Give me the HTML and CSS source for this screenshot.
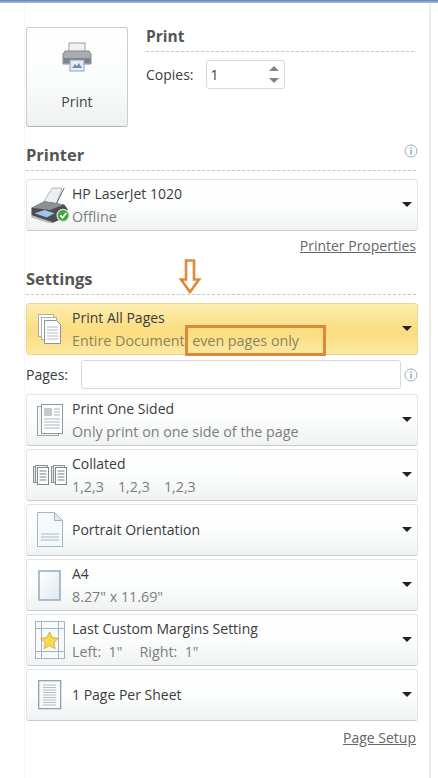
FILE: index.html
```html
<!DOCTYPE html>
<html lang="en">
<head>
    <meta charset="UTF-8">
    <meta name="viewport" content="width=device-width, initial-scale=1.0">
    <title>Print</title>
    <link rel="stylesheet" href="styles.css">
</head>
<body>
    <div class="top-bar"></div>
    <main class="panel">
        <div class="print-head">
            <button class="print-button">
                <svg width="30" height="30" viewBox="0 0 30 30">
                    <rect x="7" y="1" width="16" height="10" fill="#f2f2f2" stroke="#9a9fa3"/>
                    <path d="M3 9h24l2 3v10H1V12z" fill="#a9adb0" stroke="#85898c"/>
                    <rect x="1.500" y="16" width="27" height="5" fill="#7f8386"/>
                    <rect x="8" y="18" width="14" height="11" fill="#e4edf6" stroke="#8da3b8"/>
                    <path d="M10 26l3-4 2 2 2-3 3 5z" fill="#6f8fb0"/>
                </svg>
                <span>Print</span>
            </button>
            <div class="print-side">
                <h2 class="print-title">Print</h2>
                <div class="copies">
                    <label>Copies:</label>
                    <div class="copies-input">
                        <span>1</span>
                        <div class="spinner">
                            <i class="spin-up"></i>
                            <i class="spin-down"></i>
                        </div>
                    </div>
                </div>
            </div>
        </div>

        <div class="section-head printer-head">
            <h2>Printer</h2>
            <svg class="info" width="14" height="14" viewBox="0 0 14 14"><circle cx="7" cy="7" r="6" fill="#fff" stroke="#8fb0cc"/><rect x="6.400" y="6" width="1.300" height="4.500" fill="#6f94b5"/><rect x="6.400" y="3.500" width="1.300" height="1.400" fill="#6f94b5"/></svg>
        </div>
        <div class="drop">
            <div class="drop-icon">
                <svg width="40" height="36" viewBox="2 1 36 33">
                    <path d="M14 15L22 2h9l-5 14z" fill="#eceeef" stroke="#a8adb0" stroke-width=".8"/>
                    <path d="M26 16L33 2" stroke="#555" stroke-width=".8"/>
                    <path d="M3 20l12-6 18 3 3 4v7l-14 6L3 27z" fill="#4a4e52"/>
                    <path d="M3 20l12-6 18 3-13 5z" fill="#8b9095"/>
                    <path d="M6 25l9-3 9 3-7 4z" fill="#9fc6e6"/>
                    <path d="M3 27l19 6v2L3 29z" fill="#b5b9bc"/>
                    <circle cx="32" cy="27" r="5.500" fill="#44a63c" stroke="#d8dcd8" stroke-width="1.200"/>
                    <path d="M29.500 27l2 2.200 3.500-4.400" fill="none" stroke="#fff" stroke-width="1.600"/>
                </svg>
            </div>
            <div class="drop-text">
                <div class="drop-title">HP LaserJet 1020</div>
                <div class="drop-sub">Offline</div>
            </div>
            <i class="caret"></i>
        </div>
        <div class="link-row"><a href="#">Printer Properties</a></div>

        <div class="section-head settings-head">
            <h2>Settings</h2>
        </div>
        <div class="drop drop-active">
            <div class="drop-icon">
                <svg width="26" height="32" viewBox="0 0 26 32">
                    <rect x="1.500" y="1.500" width="15" height="22" fill="#fff" stroke="#a9afb3"/>
                    <rect x="4.500" y="4.500" width="15" height="22" fill="#fff" stroke="#a9afb3"/>
                    <path d="M7.500 7.500h12l4 4v19h-16z" fill="#fdfdfd" stroke="#8e9599"/>
                    <path d="M10 14h11M10 17h11M10 20h11M10 23h11M10 26h11" stroke="#b9bec2"/>
                </svg>
            </div>
            <div class="drop-text">
                <div class="drop-title">Print All Pages</div>
                <div class="drop-sub">Entire Document: even pages only</div>
            </div>
            <i class="caret"></i>
        </div>
        <div class="pages-row">
            <label>Pages:</label>
            <div class="pages-input"></div>
            <svg class="info" width="14" height="14" viewBox="0 0 14 14"><circle cx="7" cy="7" r="6" fill="#fff" stroke="#8fb0cc"/><rect x="6.400" y="6" width="1.300" height="4.500" fill="#6f94b5"/><rect x="6.400" y="3.500" width="1.300" height="1.400" fill="#6f94b5"/></svg>
        </div>

        <div class="drop-list">
            <div class="drop">
                <div class="drop-icon">
                    <svg width="28" height="34" viewBox="0 0 28 34">
                        <rect x="1.500" y="3.500" width="21" height="29" fill="#f4f6f7" stroke="#9aa3a8"/>
                        <rect x="5.500" y="1.500" width="21" height="29" fill="#fff" stroke="#8e979c"/>
                        <rect x="8" y="5" width="8" height="8" fill="#c3ccd3"/>
                        <path d="M18 6h6M18 9h6M18 12h6M8 16h16M8 19h16M8 22h16M8 25h16" stroke="#aeb5ba"/>
                    </svg>
                </div>
                <div class="drop-text">
                    <div class="drop-title">Print One Sided</div>
                    <div class="drop-sub">Only print on one side of the page</div>
                </div>
                <i class="caret"></i>
            </div>
            <div class="drop">
                <div class="drop-icon">
                    <svg width="34" height="22" viewBox="0 0 34 22">
                        <rect x=".5" y="2.500" width="11" height="16" fill="#dfe3e6" stroke="#8c9499"/>
                        <rect x="2.500" y="1.500" width="12" height="17" fill="#eef0f2" stroke="#8c9499"/>
                        <rect x="4.500" y="3.500" width="11" height="17" fill="#fff" stroke="#7f888d"/>
                        <path d="M6.500 7h7M6.500 10h7M6.500 13h7M6.500 16h7" stroke="#79838a"/>
                        <rect x="18.500" y="2.500" width="11" height="16" fill="#dfe3e6" stroke="#8c9499"/>
                        <rect x="20.500" y="1.500" width="11" height="17" fill="#eef0f2" stroke="#8c9499"/>
                        <rect x="22.500" y="3.500" width="11" height="17" fill="#fff" stroke="#7f888d"/>
                        <path d="M24.500 7h7M24.500 10h7M24.500 13h7M24.500 16h7" stroke="#79838a"/>
                    </svg>
                </div>
                <div class="drop-text">
                    <div class="drop-title">Collated</div>
                    <div class="drop-sub collated-sub"><span>1,2,3</span><span>1,2,3</span><span>1,2,3</span></div>
                </div>
                <i class="caret"></i>
            </div>
            <div class="drop drop-single">
                <div class="drop-icon">
                    <svg width="28" height="38" viewBox="0 0 28 38">
                        <path d="M1.500 1.500h17l8 8v26h-25z" fill="#f6f9fc" stroke="#a3b6c8"/>
                        <path d="M18.500 1.500v8h8z" fill="#dfe8f0" stroke="#a3b6c8"/>
                        <path d="M5 23h18M5 26h18M5 29h18" stroke="#a7b9c9"/>
                    </svg>
                </div>
                <div class="drop-text">
                    <div class="drop-title">Portrait Orientation</div>
                </div>
                <i class="caret"></i>
            </div>
            <div class="drop">
                <div class="drop-icon">
                    <svg width="24" height="31" viewBox="0 0 24 31">
                        <defs><linearGradient id="a4Fill" x1="0" y1="0" x2="1" y2="1"><stop offset="0" stop-color="#fff"/><stop offset="1" stop-color="#dde8f2"/></linearGradient></defs>
                        <rect x="1" y="1" width="21" height="29" fill="url(#a4Fill)" stroke="#8fa3b5" stroke-width="1.400"/>
                    </svg>
                </div>
                <div class="drop-text">
                    <div class="drop-title">A4</div>
                    <div class="drop-sub">8.27" x 11.69"</div>
                </div>
                <i class="caret"></i>
            </div>
            <div class="drop">
                <div class="drop-icon">
                    <svg width="30" height="39" viewBox="0 0 30 39">
                        <rect x=".5" y=".5" width="29" height="37" fill="#f7f9fb" stroke="#a3b3c0"/>
                        <path d="M6.500 .5v37M23.500 .5v37M.5 7.500h29M.5 30.500h29" stroke="#a3b3c0"/>
                        <path d="M14.500 11l2.700 5.600 6.100.8-4.500 4.200 1.200 6.100-5.500-3-5.500 3 1.200-6.100-4.500-4.200 6.100-.8z" fill="#f6d94e" stroke="#c9a63a" stroke-width=".8"/>
                    </svg>
                </div>
                <div class="drop-text">
                    <div class="drop-title">Last Custom Margins Setting</div>
                    <div class="drop-sub margins-sub"><span>Left:&nbsp; 1"</span><span>Right:&nbsp; 1"</span></div>
                </div>
                <i class="caret"></i>
            </div>
            <div class="drop drop-single">
                <div class="drop-icon">
                    <svg width="24" height="30" viewBox="0 0 24 30">
                        <rect x=".7" y=".7" width="22" height="28" fill="#f7f9fb" stroke="#8a9aa6" stroke-width="1.200"/>
                        <path d="M5 5h13M5 7.500h13M5 10h13M5 12.500h13M5 15h13M5 17.500h13M5 20h13M5 22.500h13M5 25h13" stroke="#b6bec4"/>
                    </svg>
                </div>
                <div class="drop-text">
                    <div class="drop-title">1 Page Per Sheet</div>
                </div>
                <i class="caret"></i>
            </div>
        </div>
        <div class="link-row page-setup"><a href="#">Page Setup</a></div>

        <!-- annotations drawn over the screenshot -->
        <svg class="mark-arrow" width="22" height="35" viewBox="0 0 22 35">
            <path d="M7 1.500h8v19h5L11 33 2 20.500h5z" fill="#fff" stroke="#e0873a" stroke-width="2.600"/>
        </svg>
        <div class="mark-box"></div>
    </main>
</body>
</html>
```
FILE: styles.css
```css
/* General body styles */
body {
    margin: 0;
    font-family: "Open Sans", "Noto Sans", sans-serif;
    font-size: 14px;
    color: #3c3c3c;
    background-color: #fff;
    height: 778px;
    overflow: hidden;
}

.top-bar {
    height: 3px;
    background: linear-gradient(#5f86ad, #a9c2d8);
}

/* Panel holding all the sections */
.panel {
    position: relative;
    box-sizing: border-box;
    width: 407px;
    height: 775px;
    margin-left: 24px;
    padding: 24px 12px 0 1px;
    border-left: 1px solid #f6f6f6;
    border-right: 2px solid #ececec;
}

/* Print button and copies */
.print-head {
    display: flex;
    gap: 18px;
}

.print-button {
    box-sizing: border-box;
    width: 102px;
    height: 100px;
    padding: 14px 0 0;
    display: flex;
    flex-direction: column;
    align-items: center;
    gap: 20px;
    font: inherit;
    color: #444;
    background: linear-gradient(#fff, #fbfcfc 55%, #eef1f1);
    border: 1px solid #c9cdce;
    border-bottom-color: #b4b8b9;
    border-radius: 3px;
}

.print-side {
    flex-grow: 1;
    margin-top: -1px;
}

.print-title {
    margin: 0 3px 0 0;
    padding-bottom: 5px;
    font-size: 15.500px;
    line-height: 20px;
    color: #555;
    border-bottom: 1px dashed #c6c6c6;
}

.copies {
    display: flex;
    align-items: center;
    gap: 12px;
    margin-top: 8px;
}

.copies-input {
    box-sizing: border-box;
    width: 79px;
    height: 29px;
    padding: 0 4px;
    display: flex;
    justify-content: space-between;
    align-items: center;
    background-color: #fff;
    border: 1px solid #d6d9da;
    border-radius: 3px;
}

.spinner {
    display: flex;
    flex-direction: column;
    gap: 7px;
    margin-right: 1px;
}

.spinner i {
    display: block;
    width: 0;
    height: 0;
    border-left: 5px solid transparent;
    border-right: 5px solid transparent;
}

.spin-up {
    border-bottom: 5px solid #808486;
}

.spin-down {
    border-top: 5px solid #808486;
}

/* Section headings */
.section-head {
    display: flex;
    justify-content: space-between;
    align-items: flex-start;
    width: 390px;
    margin-bottom: 8px;
    padding-bottom: 4px;
    border-bottom: 1px dashed #c6c6c6;
}

.section-head h2 {
    margin: 0;
    font-size: 16.500px;
    line-height: 22px;
    color: #555;
}

.printer-head {
    margin-top: 17px;
}

.settings-head {
    margin-top: 12px;
}

.printer-head .info {
    margin: 0 -2px 0 0;
}

/* Dropdown rows */
.drop {
    box-sizing: border-box;
    width: 392px;
    height: 52px;
    display: flex;
    align-items: center;
    background: linear-gradient(#fff, #fcfdfd 50%, #f0f3f3);
    border: 1px solid #e3e6e7;
    border-bottom-color: #c8cccd;
    border-radius: 3px;
}

.drop-active {
    background: linear-gradient(#fdeeb0, #fbdc7f 55%, #fde9a0);
    border-color: #ecd88c;
}

.drop-list {
    display: flex;
    flex-direction: column;
    gap: 3px;
    margin-top: 5px;
}

.drop-icon {
    width: 45px;
    flex-shrink: 0;
    display: flex;
    justify-content: center;
    align-items: center;
}

.drop-text {
    flex-grow: 1;
    line-height: 23px;
}

.drop-single .drop-text {
    padding-bottom: 2px;
}

.drop-sub {
    font-size: 14.300px;
    color: #7d7d7d;
}

.drop-active .drop-sub {
    color: #8a8460;
}

.collated-sub {
    display: flex;
    gap: 14px;
}

.margins-sub {
    display: flex;
    gap: 17px;
}

.caret {
    width: 0;
    height: 0;
    margin: 0 5px 2px 0;
    border-left: 5px solid transparent;
    border-right: 5px solid transparent;
    border-top: 5px solid #222;
}

/* Links */
.link-row {
    width: 390px;
    margin-top: 5px;
    line-height: 20px;
    text-align: right;
}

.link-row a {
    color: #666;
    text-decoration: underline;
}

.page-setup {
    margin-top: 7px;
}

/* Pages field */
.pages-row {
    display: flex;
    align-items: center;
    width: 392px;
    margin-top: 5px;
}

.pages-row label {
    width: 55px;
}

.pages-input {
    box-sizing: border-box;
    width: 320px;
    height: 29px;
    background-color: #fff;
    border: 1px solid #d6d9da;
    border-radius: 3px;
}

.pages-row .info {
    margin-left: 3px;
}

/* Orange annotations */
.mark-arrow {
    position: absolute;
    left: 154px;
    top: 256px;
}

.mark-box {
    position: absolute;
    left: 160px;
    top: 322px;
    box-sizing: border-box;
    width: 141px;
    height: 31px;
    border: 3px solid #e0873a;
}
```
